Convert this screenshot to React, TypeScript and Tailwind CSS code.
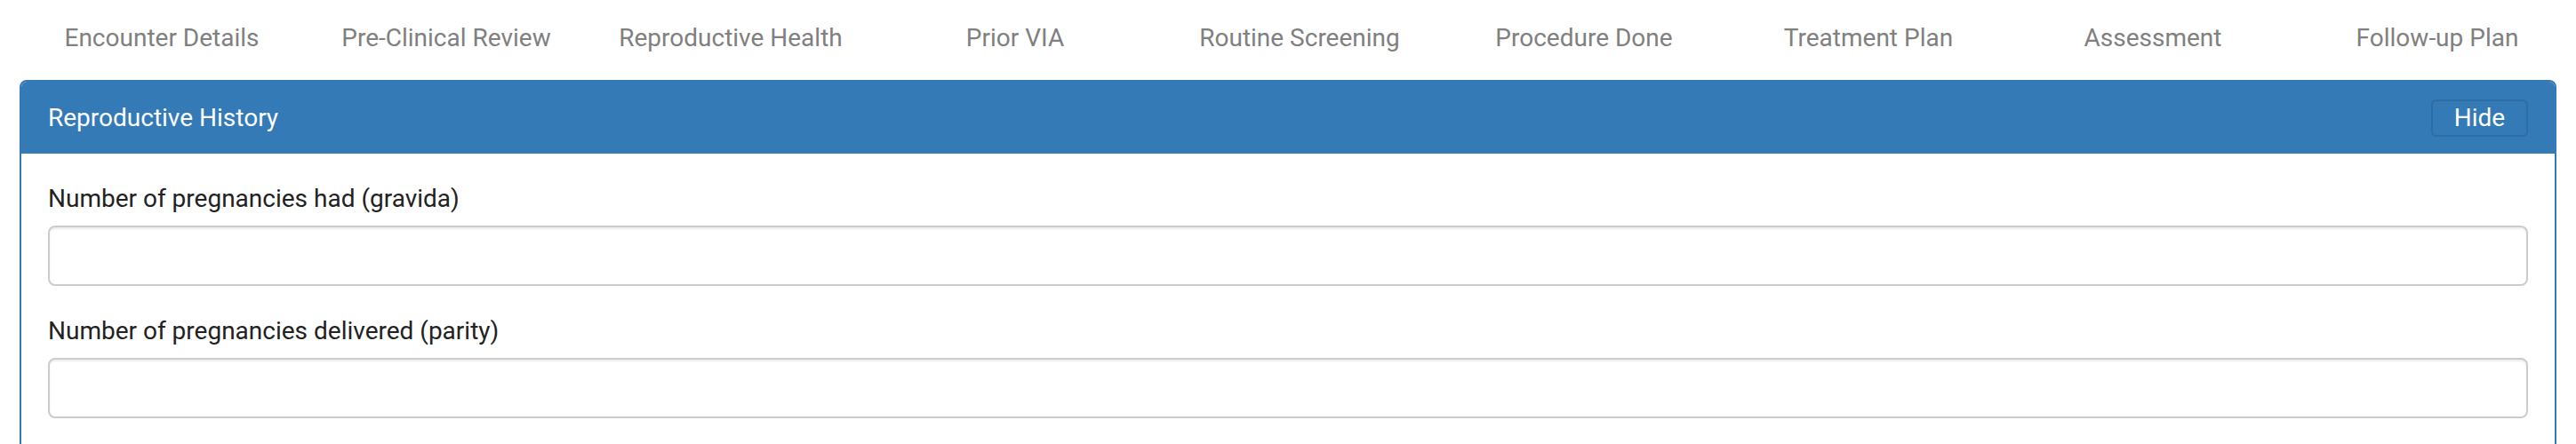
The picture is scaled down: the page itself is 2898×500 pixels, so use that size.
import React from 'react';

const tabs = [
  'Encounter Details',
  'Pre-Clinical Review',
  'Reproductive Health',
  'Prior VIA',
  'Routine Screening',
  'Procedure Done',
  'Treatment Plan',
  'Assessment',
  'Follow-up Plan',
];

const fields = [
  { id: 'gravida', label: 'Number of pregnancies had (gravida)' },
  { id: 'parity', label: 'Number of pregnancies delivered (parity)' },
];

function App() {
  return (
    <div className="min-h-[500px] bg-white overflow-hidden font-['Roboto','Liberation_Sans',sans-serif]">
      <nav className="flex h-[90px] pl-[22px] pt-[23px] overflow-hidden">
        {tabs.map((tab) => (
          <div
            key={tab}
            className="w-[320px] shrink-0 text-center text-[28px] leading-[40px] text-[#808080] whitespace-nowrap"
          >
            {tab}
          </div>
        ))}
      </nav>

      <div className="px-[22px]">
        <div className="border-2 border-[#337ab7] rounded-[8px] overflow-hidden">
          <div className="h-[81px] bg-[#337ab7] flex items-center justify-between pl-[30px] pr-[30px]">
            <span className="text-white text-[28px]">Reproductive History</span>
            <button className="h-[42px] w-[109px] rounded-[6px] border-2 border-[#2e6da4] bg-[#337ab7] text-white text-[28px] leading-none">
              Hide
            </button>
          </div>
          <div className="px-[30px] pt-[31px] pb-[30px]">
            {fields.map((f) => (
              <div key={f.id} className="mb-[31px]">
                <label
                  htmlFor={f.id}
                  className="block text-[28px] leading-[40px] text-[#222] mb-[10px]"
                >
                  {f.label}
                </label>
                <input
                  id={f.id}
                  type="text"
                  className="block w-full h-[68px] border-2 border-[#cccccc] rounded-[8px] bg-white shadow-[inset_0_2px_2px_rgba(0,0,0,0.075)] outline-none"
                />
              </div>
            ))}
          </div>
        </div>
      </div>
    </div>
  );
}

export default App;
